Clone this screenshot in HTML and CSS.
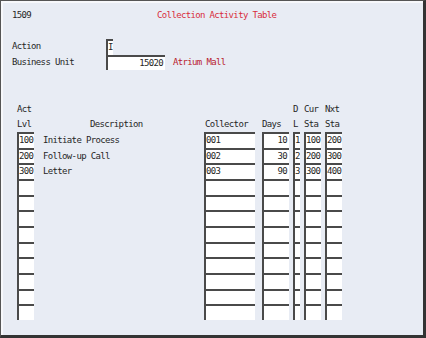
FILE: index.html
```html
<!DOCTYPE html>
<html lang="en">
<head>
  <meta charset="UTF-8" />
  <title>Collection Activity Table</title>
  <link rel="stylesheet" href="styles.css">
</head>
<body>
  <div class="screen">
    <div class="top">
      <span>1509</span>
      <span class="title">Collection Activity Table</span>
    </div>

    <div class="fields">
      <div class="label">Action</div>
      <div class="line"><span class="fld one">I</span></div>
      <div class="label">Business Unit</div>
      <div class="line">
        <span class="fld bu-no">15020</span>
        <span class="bu-name">Atrium Mall</span>
      </div>
    </div>

    <div class="table">
      <div class="head">
        <div>Act</div><div></div><div></div><div></div><div>D</div><div>Cur</div><div>Nxt</div>
      </div>
      <div class="head">
        <div>Lvl</div><div class="h-desc">Description</div><div class="h-col">Collector</div><div>Days</div><div>L</div><div>Sta</div><div>Sta</div>
      </div>

      <div class="row">
        <div class="fld">100</div><div class="desc">Initiate Process</div><div class="fld wide">001</div><div class="fld num">10</div><div class="fld">1</div><div class="fld">100</div><div class="fld">200</div>
      </div>
      <div class="row">
        <div class="fld">200</div><div class="desc">Follow-up Call</div><div class="fld wide">002</div><div class="fld num">30</div><div class="fld">2</div><div class="fld">200</div><div class="fld">300</div>
      </div>
      <div class="row">
        <div class="fld">300</div><div class="desc">Letter</div><div class="fld wide">003</div><div class="fld num">90</div><div class="fld">3</div><div class="fld">300</div><div class="fld">400</div>
      </div>
      <div class="row">
        <div class="fld"></div><div></div><div class="fld wide"></div><div class="fld"></div><div class="fld"></div><div class="fld"></div><div class="fld"></div>
      </div>
      <div class="row">
        <div class="fld"></div><div></div><div class="fld wide"></div><div class="fld"></div><div class="fld"></div><div class="fld"></div><div class="fld"></div>
      </div>
      <div class="row">
        <div class="fld"></div><div></div><div class="fld wide"></div><div class="fld"></div><div class="fld"></div><div class="fld"></div><div class="fld"></div>
      </div>
      <div class="row">
        <div class="fld"></div><div></div><div class="fld wide"></div><div class="fld"></div><div class="fld"></div><div class="fld"></div><div class="fld"></div>
      </div>
      <div class="row">
        <div class="fld"></div><div></div><div class="fld wide"></div><div class="fld"></div><div class="fld"></div><div class="fld"></div><div class="fld"></div>
      </div>
      <div class="row">
        <div class="fld"></div><div></div><div class="fld wide"></div><div class="fld"></div><div class="fld"></div><div class="fld"></div><div class="fld"></div>
      </div>
      <div class="row">
        <div class="fld"></div><div></div><div class="fld wide"></div><div class="fld"></div><div class="fld"></div><div class="fld"></div><div class="fld"></div>
      </div>
      <div class="row">
        <div class="fld"></div><div></div><div class="fld wide"></div><div class="fld"></div><div class="fld"></div><div class="fld"></div><div class="fld"></div>
      </div>
      <div class="row">
        <div class="fld"></div><div></div><div class="fld wide"></div><div class="fld"></div><div class="fld"></div><div class="fld"></div><div class="fld"></div>
      </div>
    </div>
  </div>
</body>
</html>
```

FILE: styles.css
```css
body {
  margin: 0;
  font-family: 'DejaVu Sans Mono', 'Liberation Mono', monospace;
  font-size: 9px;
  letter-spacing: -0.65px;
  color: #262626;
}
.screen {
  width: 426px;
  height: 338px;
  box-sizing: border-box;
  background: #e8ecf4;
  border-top: 1px solid #555;
  border-left: 1px solid #555;
  border-right: 3px solid #333;
  border-bottom: 3px solid #333;
  box-shadow: inset 2px 2px 0 #f7f8fb;
  padding: 6px 0 0 11px;
}
.top {
  display: flex;
  line-height: 16px;
}
.title {
  margin-left: 126px;
  color: #d82c3c;
}
.fields {
  margin-top: 16px;
  display: grid;
  grid-template-columns: 94px 1fr;
  grid-auto-rows: 15.667px;
}
.label {
  line-height: 15.667px;
}
.line {
  display: flex;
  align-items: flex-start;
}
.fld {
  display: block;
  background: #fff;
  border-top: 2px solid #4a4a4a;
  border-left: 2px solid #4a4a4a;
  height: 13.667px;
  line-height: 13.667px;
  overflow: hidden;
  white-space: nowrap;
}
.one {
  flex: 0 0 5px;
  width: 5px;
}
.bu-no {
  width: 55px;
  text-align: right;
  padding-right: 2px;
}
.bu-name {
  margin-left: 8px;
  line-height: 15.667px;
  color: #b8202c;
}
.table {
  margin-top: 31.7px;
  margin-left: 5px;
}
.head, .row {
  display: grid;
  grid-template-columns: 17px 162px 54px 27px 7px 17px 17px;
  column-gap: 4px;
}
.head {
  height: 15px;
  line-height: 15px;
}
.row {
  height: 15.667px;
}
.h-desc {
  padding-left: 52px;
}
.h-col {
  padding-left: 1px;
}
.desc {
  padding-left: 5px;
  line-height: 17.5px;
}
.wide {
  width: 49px;
}
.num {
  text-align: right;
  padding-right: 2px;
}
```
